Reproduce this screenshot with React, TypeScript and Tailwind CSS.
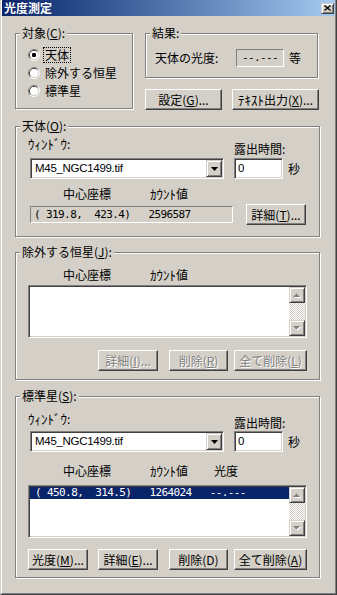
import type { ReactNode } from "react";

const FACE = "font-['Noto_Sans_CJK_JP',sans-serif]";
const MONO = "font-['DejaVu_Sans_Mono',monospace]";

const etched = "border border-[#808080] shadow-[inset_1px_1px_0_#fff,1px_1px_0_#fff]";
const raised =
  "border border-t-white border-l-white border-r-[#404040] border-b-[#404040] shadow-[inset_-1px_-1px_0_#808080]";
const sunken =
  "border border-t-[#808080] border-l-[#808080] border-r-white border-b-white shadow-[inset_1px_1px_0_#404040,inset_-1px_-1px_0_#D4D0C8] p-px";
const thinSunken = "border border-t-[#808080] border-l-[#808080] border-r-white border-b-white";
const scrollBtn =
  "border border-t-[#D4D0C8] border-l-[#D4D0C8] border-r-[#404040] border-b-[#404040] shadow-[inset_1px_1px_0_#fff,inset_-1px_-1px_0_#808080]";

// half-width katakana looks too small in Noto at 12px
const Kana = ({ children }: { children: ReactNode }) => <span className="text-[13px]">{children}</span>;

type GroupProps = { label: ReactNode; className: string; children?: ReactNode };

const Group = ({ label, className, children }: GroupProps) => (
  <div className={`flex flex-col ${etched} ${className}`}>
    <div className="-mt-[8px] ml-[4px] h-[14px] w-fit bg-[#D4D0C8] px-[2px] leading-[14px]">
      {label}
    </div>
    {children}
  </div>
);

type BtnProps = { children: ReactNode; className: string; disabled?: boolean };

const Btn = ({ children, className, disabled }: BtnProps) => (
  <div
    className={`flex h-[21px] items-center justify-center leading-[14px] ${raised} ${
      disabled ? "text-[#808080] [text-shadow:1px_1px_0_#fff]" : "text-black"
    } ${className}`}
  >
    {children}
  </div>
);

const Radio = ({ checked }: { checked?: boolean }) => (
  <svg width="12" height="12" viewBox="0 0 12 12" className="shrink-0">
    <path d="M2.11 9.89A5.5 5.5 0 0 1 9.89 2.11" fill="none" stroke="#808080" />
    <path d="M9.89 2.11A5.5 5.5 0 0 1 2.11 9.89" fill="none" stroke="#fff" />
    <path d="M2.82 9.18A4.5 4.5 0 0 1 9.18 2.82" fill="none" stroke="#404040" />
    <path d="M9.18 2.82A4.5 4.5 0 0 1 2.82 9.18" fill="none" stroke="#D4D0C8" />
    <circle cx="6" cy="6" r="4" fill="#fff" />
    {checked && <rect x="4" y="4" width="4" height="4" rx="1.2" fill="#000" />}
  </svg>
);

const Combo = () => (
  <div className={`flex h-[21px] w-[194px] bg-white ${sunken}`}>
    <div className="flex-1 pl-[3px] text-[11.5px] leading-[17px] font-['Liberation_Sans',sans-serif] tracking-[-0.3px]">
      M45_NGC1499.tif
    </div>
    <div className={`flex h-[17px] w-[16px] items-center justify-center bg-[#D4D0C8] ${scrollBtn}`}>
      <svg width="7" height="4" viewBox="0 0 7 4">
        <path d="M0 0H7L3.5 4Z" fill="#000" />
      </svg>
    </div>
  </div>
);

const Exposure = () => (
  <div className="flex items-center">
    <div className={`h-[21px] w-[49px] bg-white pl-[3px] text-[11.5px] leading-[17px] font-['Liberation_Sans',sans-serif] ${sunken}`}>
      0
    </div>
    <span className="ml-[5px] leading-[14px]">秒</span>
  </div>
);

const Arrow = ({ up }: { up?: boolean }) => (
  <div className={`flex h-[16px] w-[16px] items-center justify-center bg-[#D4D0C8] ${scrollBtn}`}>
    <svg width="8" height="5" viewBox="0 0 8 5">
      <path d={up ? "M1 5H8L4.5 1.5Z" : "M1 1H8L4.5 4.5Z"} fill="#fff" />
      <path d={up ? "M0 4H7L3.5 0.5Z" : "M0 0H7L3.5 3.5Z"} fill="#808080" />
    </svg>
  </div>
);

const ListBox = ({ children }: { children?: ReactNode }) => (
  <div className={`ml-[12px] flex h-[53px] w-[279px] bg-white ${sunken}`}>
    <div className="flex-1">{children}</div>
    <div className="flex w-[16px] flex-col">
      <Arrow up />
      <div className="flex-1 bg-[repeating-conic-gradient(#fff_0%_25%,#D4D0C8_0%_50%)] bg-[length:2px_2px]" />
      <Arrow />
    </div>
  </div>
);

const Headers = ({ withMag }: { withMag?: boolean }) => (
  <div className="flex h-[14px] leading-[14px]">
    <span className="ml-[47px] w-[87px]">中心座標</span>
    <span className="w-[64px]">
      <Kana>ｶｳﾝﾄ</Kana>値
    </span>
    {withMag && <span>光度</span>}
  </div>
);

export default function App() {
  return (
    <div
      className={`h-[595px] w-[337px] overflow-hidden border-r border-b border-l border-r-[#404040] border-b-[#404040] border-l-[#D4D0C8] bg-[#D4D0C8] text-[12px] text-black ${FACE}`}
    >
      <div className="flex h-full flex-col border-r border-b border-l border-r-[#808080] border-b-[#808080] border-l-white">
        {/* title bar */}
        <div className="flex h-[16px] items-center bg-gradient-to-r from-[#0A246A] to-[#A6CAF0] pl-[2px] pr-[1px]">
          <span className="text-[12px] leading-[14px] font-bold text-white">光度測定</span>
          <div className={`ml-auto flex h-[11px] w-[13px] items-center justify-center bg-[#D4D0C8] ${scrollBtn}`}>
            <svg width="7" height="6" viewBox="0 0 7 6">
              <path d="M0.5 0.5L6.5 5.5M6.5 0.5L0.5 5.5" stroke="#000" strokeWidth="1.3" />
            </svg>
          </div>
        </div>

        <div className="flex flex-col px-[13px]">
          {/* top row */}
          <div className="mt-[17px] flex">
            <Group
              className="h-[76px] w-[118px]"
              label={
                <>
                  対象(<u className="underline-offset-1">C</u>):
                </>
              }
            >
              <div className="mt-[6px] flex flex-col">
                <div className="flex h-[18px] items-center pl-[12px]">
                  <Radio checked />
                  <span className="ml-[3px] border border-dotted border-black px-px leading-[14px]">天体</span>
                </div>
                <div className="flex h-[18px] items-center pl-[12px]">
                  <Radio />
                  <span className="ml-[5px] leading-[14px]">除外する恒星</span>
                </div>
                <div className="flex h-[18px] items-center pl-[12px]">
                  <Radio />
                  <span className="ml-[5px] leading-[14px]">標準星</span>
                </div>
              </div>
            </Group>

            <div className="ml-[12px] flex flex-col">
              <Group className="h-[45px] w-[173px]" label="結果:">
                <div className="mt-[9px] flex h-[18px] items-center">
                  <span className="ml-[9px] w-[81px] leading-[14px]">天体の光度:</span>
                  <div className={`flex h-[18px] w-[48px] items-center justify-center text-[11px] tracking-[-0.6px] ${MONO} ${thinSunken}`}>
                    --.---
                  </div>
                  <span className="ml-[5px] leading-[14px]">等</span>
                </div>
              </Group>
              <div className="mt-[11px] flex">
                <Btn className="w-[77px]">
                  設定(<u className="underline-offset-1">G</u>)...
                </Btn>
                <Btn className="ml-[10px] w-[87px]">
                  <Kana>ﾃｷｽﾄ</Kana>出力(<u className="underline-offset-1">X</u>)...
                </Btn>
              </div>
            </div>
          </div>

          {/* target */}
          <Group
            className="mt-[16px] h-[111px] w-[305px]"
            label={
              <>
                天体(<u className="underline-offset-1">O</u>):
              </>
            }
          >
            <div className="flex">
              <div className="ml-[14px] flex flex-col">
                <span className="-ml-[2px] mt-[4px] leading-[14px]">
                  <Kana>ｳｨﾝﾄﾞｳ</Kana>:
                </span>
                <div className="mt-[7px]">
                  <Combo />
                </div>
              </div>
              <div className="ml-[10px] flex flex-col">
                <span className="mt-[9px] leading-[14px]">露出時間:</span>
                <div className="mt-[2px]">
                  <Exposure />
                </div>
              </div>
            </div>
            <div className="mt-[8px]">
              <Headers />
            </div>
            <div className="mt-[3px] flex h-[21px] items-center">
              <div className={`ml-[14px] h-[17px] w-[203px] whitespace-pre pl-[3px] text-[11px] tracking-[-0.6px] leading-[15px] ${MONO} ${thinSunken}`}>
                {"( 319.8,  423.4)   2596587"}
              </div>
              <Btn className="ml-[13px] w-[60px]">
                詳細(<u className="underline-offset-1">T</u>)...
              </Btn>
            </div>
          </Group>

          {/* excluded stars */}
          <Group
            className="mt-[15px] h-[128px] w-[305px]"
            label={
              <>
                除外する恒星(<u className="underline-offset-1">J</u>):
              </>
            }
          >
            <div className="mt-[9px]">
              <Headers />
            </div>
            <div className="mt-[3px]">
              <ListBox />
            </div>
            <div className="mt-[12px] flex">
              <Btn disabled className="ml-[82px] w-[60px]">
                詳細(<u className="underline-offset-1">I</u>)...
              </Btn>
              <Btn disabled className="ml-[11px] w-[59px]">
                削除(<u className="underline-offset-1">R</u>)
              </Btn>
              <Btn disabled className="ml-[6px] w-[73px]">
                全て削除(<u className="underline-offset-1">L</u>)
              </Btn>
            </div>
          </Group>

          {/* reference stars */}
          <Group
            className="mt-[16px] h-[182px] w-[305px]"
            label={
              <>
                標準星(<u className="underline-offset-1">S</u>):
              </>
            }
          >
            <div className="flex">
              <div className="ml-[14px] flex flex-col">
                <span className="-ml-[2px] mt-[9px] leading-[14px]">
                  <Kana>ｳｨﾝﾄﾞｳ</Kana>:
                </span>
                <div className="mt-[5px]">
                  <Combo />
                </div>
              </div>
              <div className="ml-[10px] flex flex-col">
                <span className="mt-[13px] leading-[14px]">露出時間:</span>
                <div className="mt-[1px]">
                  <Exposure />
                </div>
              </div>
            </div>
            <div className="mt-[12px]">
              <Headers withMag />
            </div>
            <div className="mt-[7px]">
              <ListBox>
                <div className={`h-[12px] whitespace-pre bg-[#0A246A] pl-[5px] text-[11px] tracking-[-0.6px] leading-[12px] text-white ${MONO}`}>
                  {"( 450.8,  314.5)   1264024   --.---"}
                </div>
              </ListBox>
            </div>
            <div className="mt-[11px] flex">
              <Btn className="ml-[12px] w-[60px]">
                光度(<u className="underline-offset-1">M</u>)...
              </Btn>
              <Btn className="ml-[10px] w-[60px]">
                詳細(<u className="underline-offset-1">E</u>)...
              </Btn>
              <Btn className="ml-[11px] w-[59px]">削除(D)</Btn>
              <Btn className="ml-[6px] w-[73px]">
                全て削除(<u className="underline-offset-1">A</u>)
              </Btn>
            </div>
          </Group>
        </div>
      </div>
    </div>
  );
}
